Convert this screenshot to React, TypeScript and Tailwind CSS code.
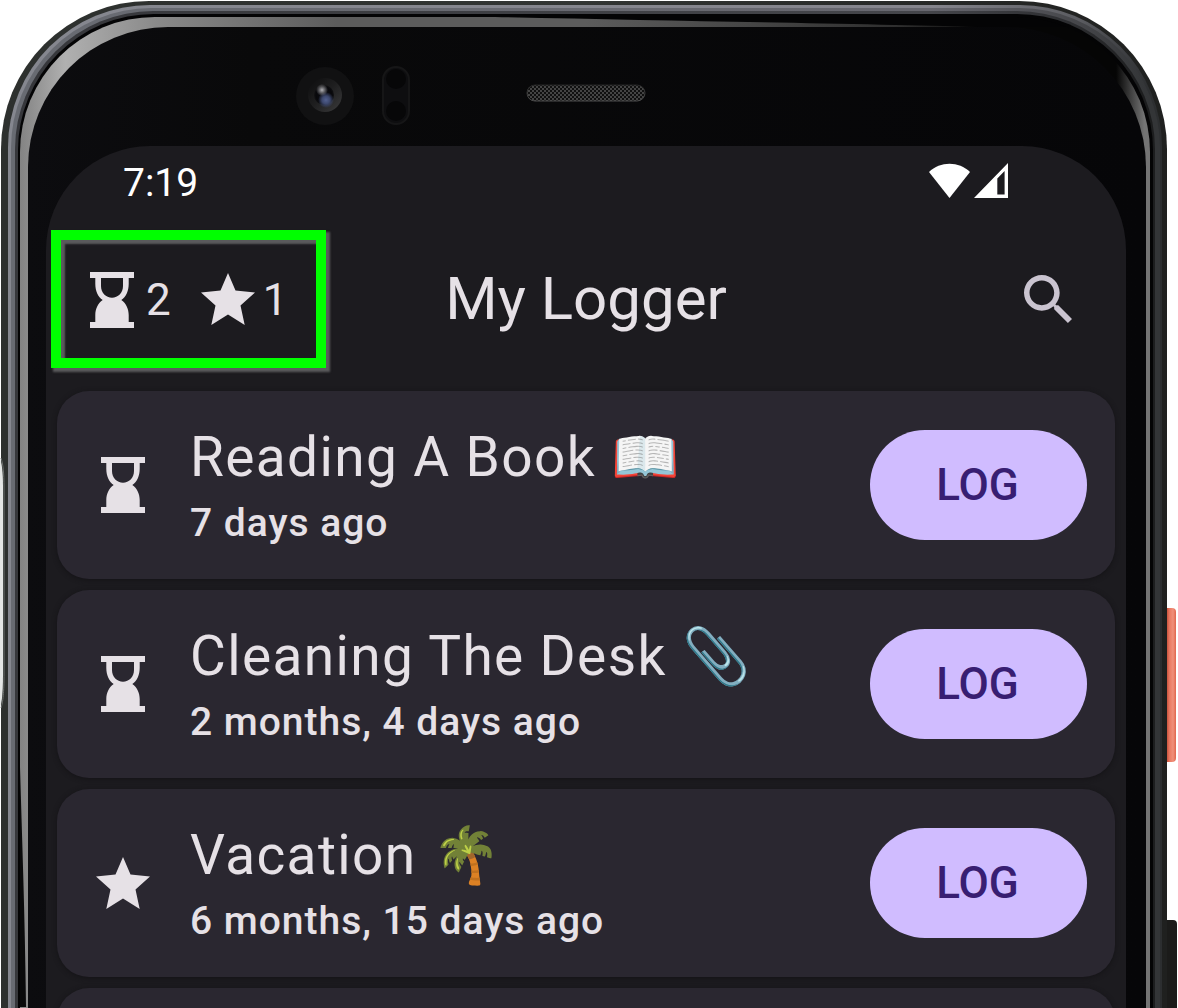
import React from "react";

function Hourglass() {
  return (
    <svg viewBox="0 0 44 56" className="h-14 w-11 shrink-0" fill="#e6e1e6" aria-hidden="true">
      <path fillRule="evenodd" d="M0 0H44V6H38.700V12C38.700 19 36 25 31.300 28C36 31 38.700 37 38.700 43V50H44V56H0V50H5.300V43C5.300 37 8 31 12.700 28C8 25 5.300 19 5.300 12V6H0ZM11 6V14C11 21 16 25.700 22 25.700S33 21 33 14V6Z" />
    </svg>
  );
}

function Star() {
  return (
    <svg viewBox="0 0 54 52" className="h-[52px] w-[54px] shrink-0" fill="#e6e1e6" aria-hidden="true">
      <path d="M27 0L34.500 17.500L54 19.500L39.500 32.500L43.700 52L27 41.500L10.300 52L14.500 32.500L0 19.500L19.500 17.500Z" />
    </svg>
  );
}

function Camera() {
  return (
    <svg viewBox="0 0 120 64" className="h-16 w-[120px]" aria-hidden="true">
      <defs>
        <radialGradient id="lens-glass" cx="0.5" cy="0.5" r="0.5">
          <stop offset="0" stopColor="#0b0c14" />
          <stop offset="0.8" stopColor="#08080b" />
          <stop offset="1" stopColor="#111113" />
        </radialGradient>
        <radialGradient id="lens-glow">
          <stop offset="0" stopColor="#52608f" />
          <stop offset="0.5" stopColor="#3c476c" />
          <stop offset="1" stopColor="#3c476c" stopOpacity="0" />
        </radialGradient>
        <radialGradient id="lens-spot">
          <stop offset="0" stopColor="#b2b2b6" />
          <stop offset="1" stopColor="#a2a2a6" stopOpacity="0" />
        </radialGradient>
        <linearGradient id="lens-ring" x1="0" y1="0" x2="1" y2="1">
          <stop offset="0" stopColor="#0c0c0d" />
          <stop offset="0.5" stopColor="#1f1f20" />
          <stop offset="1" stopColor="#3c3c3d" />
        </linearGradient>
      </defs>
      <circle cx="29" cy="32" r="29" fill="#111112" />
      <circle cx="29" cy="31" r="17" fill="url(#lens-ring)" />
      <circle cx="28" cy="31" r="10" fill="url(#lens-glass)" />
      <circle cx="30" cy="36" r="8" fill="url(#lens-glow)" />
      <circle cx="26" cy="26" r="6" fill="url(#lens-spot)" />
      <rect x="87" y="3" width="26" height="57" rx="13" fill="#0e0e10" stroke="#161617" strokeWidth="2" />
      <circle cx="100" cy="15" r="10" fill="#070708" />
      <circle cx="100" cy="47" r="10" fill="#070708" />
    </svg>
  );
}

function Speaker() {
  return (
    <svg viewBox="0 0 120 18" className="h-[18px] w-[120px]" aria-hidden="true">
      <defs>
        <pattern id="mesh" width="4" height="4" patternUnits="userSpaceOnUse">
          <rect width="4" height="4" fill="#101010" />
          <circle cx="1" cy="1" r="1" fill="#555" />
          <circle cx="3" cy="3" r="1" fill="#555" />
        </pattern>
        <linearGradient id="mesh-rim" x1="0" y1="0" x2="0" y2="1">
          <stop offset="0" stopColor="#242424" />
          <stop offset="1" stopColor="#4c4c4c" />
        </linearGradient>
      </defs>
      <rect x="1" y="1" width="118" height="16" rx="8" fill="url(#mesh)" stroke="url(#mesh-rim)" />
    </svg>
  );
}

function StatusBar() {
  return (
    <div className="flex h-[84px] items-start justify-between pr-[118px] pl-[77px] pt-[17px]">
      <span className="text-[39px] leading-10 text-white">7:19</span>
      <div className="flex gap-1">
        <svg viewBox="0 0 41 35" className="h-[35px] w-[41px]" fill="#fff" role="img" aria-label="Wi-Fi">
          <path d="M0 9C11 -2 30 -2 41 9L20.500 35Z" />
        </svg>
        <svg viewBox="0 0 35 35" className="h-[35px] w-[34px]" preserveAspectRatio="none" fill="#fff" role="img" aria-label="Mobile signal">
          <path fillRule="evenodd" d="M0 35L35 0V35ZM24 15.500V31.500H31.500V8Z" />
        </svg>
      </div>
    </div>
  );
}

function Header() {
  return (
    <header className="grid grid-cols-[1fr_auto_1fr] items-center px-[5px]">
      <div className="flex h-[138px] w-[275px] items-center border-[10px] border-[#00ff00] pt-0.5 pl-[29px] shadow-[3px_3px_2px_1px_#5a5a5c,inset_3px_3px_2px_1px_#5a5a5c]">
        <Hourglass />
        <span className="ml-3 text-[44px] leading-[56px] text-[#e6e1e6]">2</span>
        <span className="mr-2 ml-[30px] flex pb-0.5">
          <Star />
        </span>
        <span className="text-[44px] leading-[56px] text-[#e6e1e6]">1</span>
      </div>
      <h1 className="text-[60px] leading-[72px] text-[#e6e1e6]">My Logger</h1>
      <button type="button" aria-label="Search" className="mr-[49px] justify-self-end">
        <svg viewBox="3 3 17.490 17.490" className="size-12" fill="#cac4d0" aria-hidden="true">
          <path d="M15.500 14h-.79l-.28-.27C15.410 12.590 16 11.110 16 9.500 16 5.910 13.090 3 9.500 3S3 5.910 3 9.500 5.910 16 9.500 16c1.610 0 3.090-.59 4.230-1.570l.27.28v.79l5 4.990L20.490 19l-4.990-5zm-6 0C7.010 14 5 11.990 5 9.500S7.010 5 9.500 5 14 7.010 14 9.500 11.990 14 9.500 14z" />
        </svg>
      </button>
    </header>
  );
}

type Entry = { icon: "hourglass" | "star"; title: string; emoji: string; ago: string };

const entries: Entry[] = [
  { icon: "hourglass", title: "Reading A Book", emoji: "📖", ago: "7 days ago" },
  { icon: "hourglass", title: "Cleaning The Desk", emoji: "📎", ago: "2 months, 4 days ago" },
  { icon: "star", title: "Vacation", emoji: "🌴", ago: "6 months, 15 days ago" },
];

function EntryCard({ entry }: { entry: Entry }) {
  return (
    <li className="flex h-[188px] items-center rounded-[32px] bg-[#2a2730] pr-7 pl-[38px] shadow-[0_1px_5px_#141316]">
      <span className="flex w-14 justify-center">
        {entry.icon === "hourglass" ? <Hourglass /> : <Star />}
      </span>
      <div className="ml-[39px] flex-1">
        <h2 className="text-[55px] leading-[76px] tracking-wide whitespace-nowrap text-[#e6e1e6]">
          {entry.title} {entry.emoji}
        </h2>
        <p className="text-[39px] leading-[56px] font-medium tracking-wide text-[#e6e1e6]">{entry.ago}</p>
      </div>
      <button type="button" className="h-[110px] w-[217px] rounded-full bg-[#d0bcff] pr-0.5 text-[44px] font-medium text-[#381e72]">
        LOG
      </button>
    </li>
  );
}

function Screen() {
  return (
    <main className="h-screen rounded-t-[104px] bg-[#1c1b1f]">
      <StatusBar />
      <Header />
      <ul className="mt-[23px] space-y-[11px] px-[11px]">
        {entries.map((e) => (
          <EntryCard key={e.title} entry={e} />
        ))}
        <li className="h-[188px] rounded-[32px] bg-[#2a2730] shadow-[0_1px_5px_#141316]" />
      </ul>
    </main>
  );
}

function Glass() {
  return (
    <div className="relative rounded-t-[140px] bg-[linear-gradient(90deg,#0c0c0f,#09090a_20%,#060608)] pr-5 pl-[18px]">
      <div className="grid h-[119px] grid-cols-[1fr_auto_1fr] items-start">
        <div className="mt-[37px] ml-[250px]">
          <Camera />
        </div>
        <div className="mt-[57px]">
          <Speaker />
        </div>
      </div>
      <Screen />
    </div>
  );
}

function Gleam() {
  return (
    <>
      <svg viewBox="0 0 100 10" preserveAspectRatio="none" className="absolute top-0 left-[42%] h-2.5 w-[55%]" aria-hidden="true">
        <path d="M0 0H100V10H78C60 7 30 4 0 0Z" fill="#040405" />
      </svg>
      <svg viewBox="0 0 8 240" className="absolute top-[750px] left-0 h-60 w-2" aria-hidden="true">
        <path d="M0 0C2 70 5 150 6 240H0Z" fill="#0a0a0b" />
      </svg>
    </>
  );
}

export default function App() {
  return (
    <div className="relative h-screen overflow-hidden bg-white pt-px pr-[11px] pl-px font-[Roboto,sans-serif]">
      <div className="absolute top-[608px] right-0.5 h-[154px] w-3 rounded-r-sm bg-[linear-gradient(90deg,#c9523d_25%,#e97860_45%,#f0907a_75%,#e0654d)]" />
      <div className="absolute top-[920px] right-px h-40 w-3 rounded-tr-sm bg-[#1b1b1a]" />
      <div className="relative rounded-t-[148px] bg-[linear-gradient(90deg,#2d302e,#323533_50%,#1f201f)] pt-1 pr-[5px] pl-[7px]">
        <div className="rounded-t-[142px] bg-[linear-gradient(90deg,#85878f,#85858d_80%,#5a5b60_93%,#2c2e30_99%)] pt-[3px] pr-0.5 pl-[3px]">
          <div className="rounded-t-[140px] bg-[linear-gradient(90deg,#686b72,#67676f_80%,#45464a_93%,#333537_99%)] pt-[3px] pr-[5px] pl-1">
            <div className="rounded-t-[138px] bg-[linear-gradient(90deg,#36373b,#45464b_80%,#2c2d30_93%,#1c1d1e_99%)] pt-[3px] pr-0.5 pl-[3px]">
              <div className="rounded-t-[136px] bg-[#040405] pt-[3px] pr-[3px] pl-0.5">
                <div className="relative overflow-hidden rounded-t-[135px] bg-[linear-gradient(90deg,#838383,#b0b0b0_4%,#8a8a8a_12%,#5c5c5c_28%,#5c5c5c_50%,#454545_65%,#2e2e2e_78%,#050505_87%,#050505_97%,#747474_99.500%)] pt-2.5 pr-1 pl-2">
                  <Gleam />
                  <Glass />
                </div>
              </div>
            </div>
          </div>
        </div>
      </div>
      <svg viewBox="0 0 5 250" className="absolute top-[458px] left-0 h-[250px] w-[5px]" aria-hidden="true">
        <path d="M0 0C2 6 3 14 3 30V215C3 235 2 244 0 250Z" fill="#e4e6e5" />
        <path d="M1 0C3 6 4 14 4 30V215C4 235 3 244 1 250" fill="none" stroke="#6d716f" />
      </svg>
    </div>
  );
}
